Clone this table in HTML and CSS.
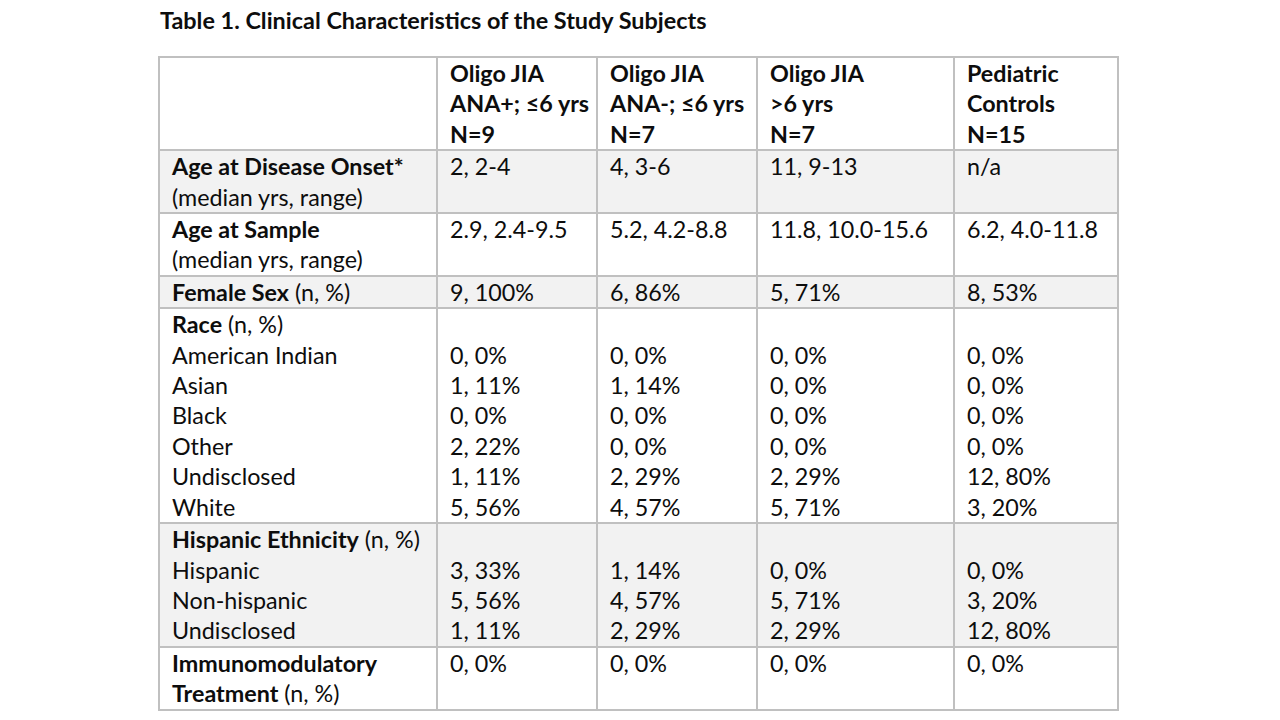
FILE: index.html
```html
<!DOCTYPE html>
<html lang="en">
<head>
<meta charset="utf-8">
<title>Table 1</title>
<link rel="stylesheet" href="styles.css">
</head>
<body>
<div class="page">
  <h1 class="title">Table 1. Clinical Characteristics of the Study Subjects</h1>
  <table class="data">
    <colgroup>
      <col class="c-label">
      <col class="c-a">
      <col class="c-b">
      <col class="c-c">
      <col class="c-d">
    </colgroup>
    <thead>
      <tr class="head">
        <th></th>
        <th>Oligo JIA<br>ANA+; ≤6 yrs<br>N=9</th>
        <th>Oligo JIA<br>ANA-; ≤6 yrs<br>N=7</th>
        <th>Oligo JIA<br>&gt;6 yrs<br>N=7</th>
        <th>Pediatric<br>Controls<br>N=15</th>
      </tr>
    </thead>
    <tbody>
      <tr class="shade">
        <td><b>Age at Disease Onset*</b><br>(median yrs, range)</td>
        <td>2, 2-4</td><td>4, 3-6</td><td>11, 9-13</td><td>n/a</td>
      </tr>
      <tr>
        <td><b>Age at Sample</b><br>(median yrs, range)</td>
        <td>2.9, 2.4-9.5</td><td>5.2, 4.2-8.8</td><td>11.8, 10.0-15.6</td><td>6.2, 4.0-11.8</td>
      </tr>
      <tr class="shade">
        <td><b>Female Sex</b> (n, %)</td>
        <td>9, 100%</td><td>6, 86%</td><td>5, 71%</td><td>8, 53%</td>
      </tr>
      <tr>
        <td><b>Race</b> (n, %)<br>American Indian<br>Asian<br>Black<br>Other<br>Undisclosed<br>White</td>
        <td><br>0, 0%<br>1, 11%<br>0, 0%<br>2, 22%<br>1, 11%<br>5, 56%</td>
        <td><br>0, 0%<br>1, 14%<br>0, 0%<br>0, 0%<br>2, 29%<br>4, 57%</td>
        <td><br>0, 0%<br>0, 0%<br>0, 0%<br>0, 0%<br>2, 29%<br>5, 71%</td>
        <td><br>0, 0%<br>0, 0%<br>0, 0%<br>0, 0%<br>12, 80%<br>3, 20%</td>
      </tr>
      <tr class="shade">
        <td><b>Hispanic Ethnicity</b> (n, %)<br>Hispanic<br>Non-hispanic<br>Undisclosed</td>
        <td><br>3, 33%<br>5, 56%<br>1, 11%</td>
        <td><br>1, 14%<br>4, 57%<br>2, 29%</td>
        <td><br>0, 0%<br>5, 71%<br>2, 29%</td>
        <td><br>0, 0%<br>3, 20%<br>12, 80%</td>
      </tr>
      <tr>
        <td><b>Immunomodulatory<br>Treatment</b> (n, %)</td>
        <td>0, 0%</td><td>0, 0%</td><td>0, 0%</td><td>0, 0%</td>
      </tr>
    </tbody>
  </table>
</div>
</body>
</html>
```
FILE: styles.css
```css
html, body {
  margin: 0;
  padding: 0;
  background: #ffffff;
}
body {
  font-family: Lato, "Open Sans", "DejaVu Sans", sans-serif;
  color: #0d0d0d;
}
.page {
  width: 1280px;
  height: 720px;
  padding-left: 158px;
  box-sizing: border-box;
  overflow: hidden;
}
.title {
  margin: 0;
  padding: 5px 0 0 2px;
  height: 56px;
  box-sizing: border-box;
  font-size: 23.4px;
  line-height: 30px;
  font-weight: 700;
}
.data {
  border-collapse: collapse;
  table-layout: fixed;
  width: 959px;
  font-size: 23.3px;
  line-height: 30.4px;
}
.c-label { width: 278px; }
.c-a { width: 160px; }
.c-b { width: 160px; }
.c-c { width: 197px; }
.c-d { width: 164px; }
.data th,
.data td {
  border: 2px solid #c0c0c0;
  padding: 0 2px 0 12px;
  vertical-align: top;
  text-align: left;
  white-space: nowrap;
}
.data th {
  font-weight: 700;
}
.data td {
  font-weight: 400;
}
.data b {
  font-weight: 700;
}
.shade td {
  background: #f2f2f2;
}
```
